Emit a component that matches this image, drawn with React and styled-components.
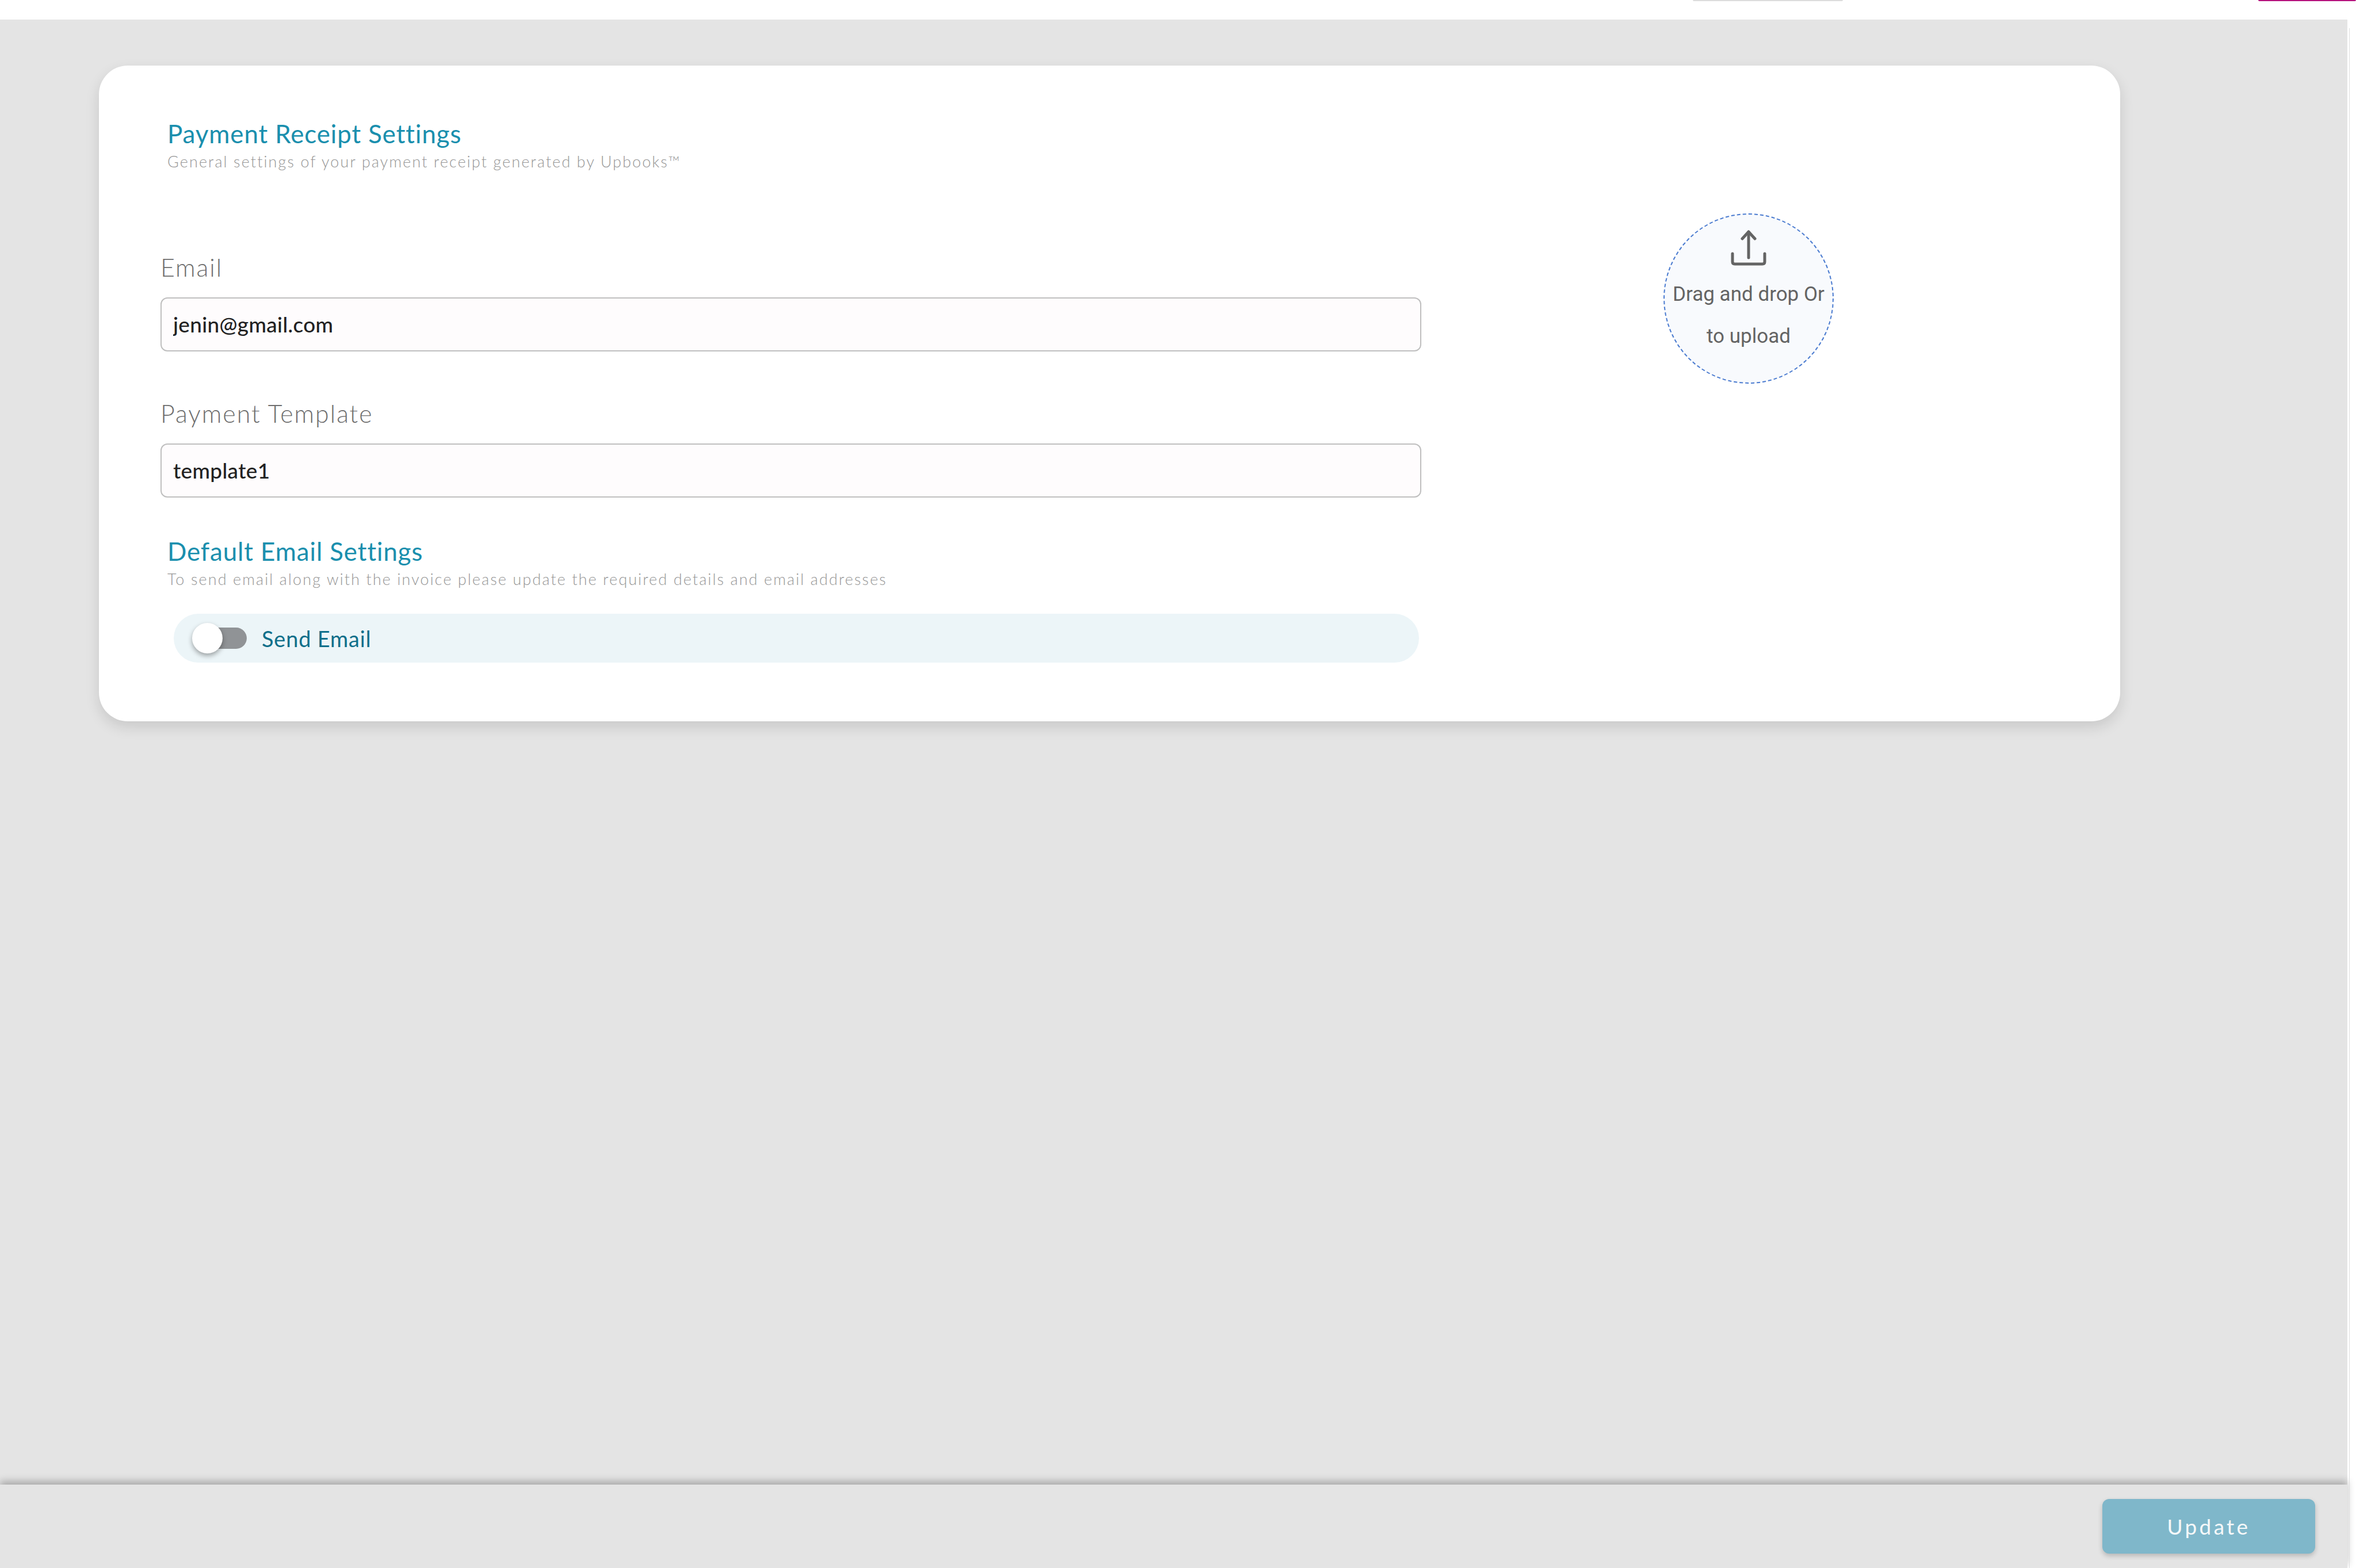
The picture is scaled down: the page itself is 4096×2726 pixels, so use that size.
import React from 'react';
import styled, { createGlobalStyle } from 'styled-components';

const GlobalStyle = createGlobalStyle`
    html, body {
        margin: 0;
        padding: 0;
        width: 4096px;
        height: 2726px;
        overflow: hidden;
        background: #fff;
    }
    * {
        box-sizing: border-box;
    }
`;

const Page = styled.div`
    width: 4096px;
    height: 2726px;
    display: flex;
    flex-direction: column;
    font-family: Lato, "Noto Sans", sans-serif;
`;

const TopBar = styled.div`
    height: 34px;
    flex: none;
    display: flex;
    align-items: flex-start;
    background: #fff;
`;

const TopTab = styled.div`
    height: 2px;
    width: ${(p) => p.$width}px;
    margin-left: ${(p) => p.$offset}px;
    background: ${(p) => p.$color};
    border-radius: 0 0 6px 6px;
`;

const Body = styled.div`
    flex: 1;
    display: flex;
    min-height: 0;
`;

const Content = styled.div`
    width: 4081px;
    flex: none;
    display: flex;
    flex-direction: column;
    background: #e4e4e4;
`;

const Gutter = styled.div`
    flex: 1;
    margin-top: 15px;
    margin-left: 3px;
    border-left: 1px solid #dedede;
`;

const Scroller = styled.div`
    flex: 1;
    padding: 80px 0 0 172px;
`;

const Card = styled.section`
    width: 3514px;
    height: 1140px;
    padding: 90px 0 0 107px;
    display: flex;
    align-items: flex-start;
    background: #fff;
    border-radius: 50px;
    box-shadow: 0 10px 24px rgba(0, 0, 0, 0.12);
`;

const Form = styled.div`
    width: 2192px;
    flex: none;
`;

const Heading = styled.div`
    padding-left: 12px;
    margin-bottom: ${(p) => p.$gap}px;
`;

const Title = styled.h2`
    margin: 0;
    font-size: 44px;
    line-height: 56px;
    font-weight: 400;
    letter-spacing: 0.85px;
    color: #1a8fae;
`;

const Subtitle = styled.p`
    margin: 3px 0 0;
    font-size: 27px;
    line-height: 36px;
    font-weight: 300;
    letter-spacing: 2.1px;
    color: #969696;
`;

const Field = styled.div`
    margin-bottom: ${(p) => p.$gap}px;
`;

const Label = styled.label`
    display: block;
    margin-bottom: 27px;
    font-size: 43px;
    line-height: 50px;
    font-weight: 300;
    letter-spacing: 1.9px;
    color: #6e6e6e;
`;

const Input = styled.input`
    display: block;
    width: 100%;
    height: 94px;
    padding: 0 20px 2px;
    background: #fefcfd;
    border: 2px solid #bfbfbf;
    border-radius: 12px;
    outline: none;
    font-family: inherit;
    font-size: 37px;
    font-weight: 500;
    letter-spacing: 0.3px;
    color: #222;
`;

const ToggleRow = styled.div`
    width: 2165px;
    height: 85px;
    margin-left: 23px;
    padding-left: 32px;
    display: flex;
    align-items: center;
    gap: 26px;
    background: #ecf5f8;
    border-radius: 43px;
`;

const Toggle = styled.div`
    position: relative;
    width: 95px;
    height: 37px;
    flex: none;
`;

const Track = styled.div`
    position: absolute;
    inset: 0 0 0 5px;
    background: #909396;
    border-radius: 19px;
`;

const Thumb = styled.div`
    position: absolute;
    top: -8px;
    left: 0;
    width: 53px;
    height: 53px;
    background: #fff;
    border-radius: 50%;
    box-shadow: 0 4px 8px rgba(0, 0, 0, 0.35);
`;

const ToggleText = styled.span`
    font-size: 38px;
    line-height: 50px;
    font-weight: 400;
    letter-spacing: 0.8px;
    color: #0f6f8a;
`;

const Dropzone = styled.div`
    width: 296px;
    height: 296px;
    margin: 167px 0 0 421px;
    padding-top: 27px;
    flex: none;
    display: flex;
    flex-direction: column;
    align-items: center;
    background: #f8fafd;
    border: 2px dashed #4a7bd0;
    border-radius: 50%;
`;

const UploadIcon = styled.svg`
    width: 62px;
    height: 62px;
    flex: none;
    margin-bottom: 13px;
`;

const DropText = styled.div`
    font-family: Roboto, sans-serif;
    font-size: 35px;
    line-height: 73px;
    white-space: nowrap;
    text-align: center;
    color: #646464;
`;

const Footer = styled.footer`
    height: 145px;
    flex: none;
    padding: 25px 56px 0 0;
    display: flex;
    justify-content: flex-end;
    align-items: flex-start;
    background: #e4e4e4;
    box-shadow: 0 -6px 12px rgba(0, 0, 0, 0.26);
`;

const UpdateButton = styled.button`
    width: 370px;
    height: 95px;
    background: #7fb7ca;
    border: none;
    border-radius: 12px;
    box-shadow: 0 4px 8px rgba(0, 0, 0, 0.2);
    font-family: inherit;
    font-size: 37px;
    font-weight: 400;
    letter-spacing: 4.3px;
    color: #f5f8f9;
`;

const App = () => {
    return (
        <Page>
            <GlobalStyle />
            <TopBar>
                <TopTab $offset={2943} $width={261} $color="#dcdcdc" />
                <TopTab $offset={722} $width={170} $color="#b5107c" />
            </TopBar>
            <Body>
                <Content>
                    <Scroller>
                        <Card>
                            <Form>
                                <Heading $gap={141}>
                                    <Title>Payment Receipt Settings</Title>
                                    <Subtitle>General settings of your payment receipt generated by Upbooks™</Subtitle>
                                </Heading>
                                <Field $gap={83}>
                                    <Label>Email</Label>
                                    <Input readOnly value="jenin@gmail.com" />
                                </Field>
                                <Field $gap={65}>
                                    <Label>Payment Template</Label>
                                    <Input readOnly value="template1" />
                                </Field>
                                <Heading $gap={42}>
                                    <Title>Default Email Settings</Title>
                                    <Subtitle>To send email along with the invoice please update the required details and email addresses</Subtitle>
                                </Heading>
                                <ToggleRow>
                                    <Toggle>
                                        <Track />
                                        <Thumb />
                                    </Toggle>
                                    <ToggleText>Send Email</ToggleText>
                                </ToggleRow>
                            </Form>
                            <Dropzone>
                                <UploadIcon viewBox="0 0 62 62" fill="none" stroke="#646464" strokeWidth="5" strokeLinecap="round" strokeLinejoin="round">
                                    <path d="M31 3V48" />
                                    <path d="M20 15L31 3L42 15" />
                                    <path d="M3 41V55Q3 59 7 59H55Q59 59 59 55V41" />
                                </UploadIcon>
                                <DropText>Drag and drop Or</DropText>
                                <DropText>to upload</DropText>
                            </Dropzone>
                        </Card>
                    </Scroller>
                    <Footer>
                        <UpdateButton>Update</UpdateButton>
                    </Footer>
                </Content>
                <Gutter />
            </Body>
        </Page>
    );
};

export default App;
